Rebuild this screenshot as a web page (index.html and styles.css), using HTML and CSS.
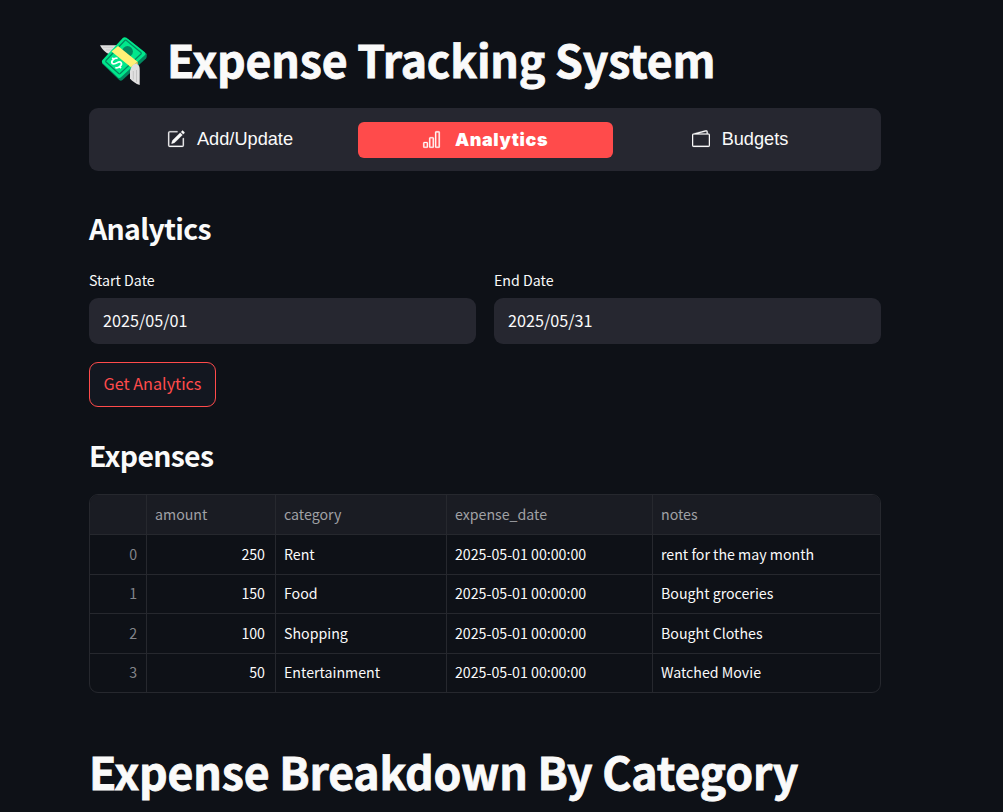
FILE: index.html
```html
<!DOCTYPE html>
<html lang="en">
<head>
<meta charset="utf-8">
<title>Expense Tracking System</title>
<link rel="stylesheet" href="styles.css">
</head>
<body>
<main class="page">
  <h1 class="title">
    <svg class="money" viewBox="0 0 48 48" aria-hidden="true">
      <path d="M0 8.200H17L12 18C7 17 3 13.500 0 8.200Z" fill="#e0e0e0"/>
      <path d="M3 10.300H13M6 13H12" stroke="#bdbdbd" stroke-width=".6"/>
      <path d="M2 24V26.500L19.500 43.300Q21 44.300 22.500 43L46 21.500Q47 20 46.800 17L28 2Z" fill="#028860"/>
      <path d="M23 .8Q24.500-.2 26.500.7L44.800 15.200Q46 16.500 45 18L21 40.300Q19.500 41.600 18 40.500L2.500 26Q1.300 24.500 2.500 23Z" fill="#00e78b"/>
      <path d="M25 3.300Q25.500 2.900 26.200 3.300L41 15.500Q41.700 16.200 41 17L20.200 36.500Q19.500 37.100 18.700 36.500L6 25Q5.400 24.300 6 23.500Z" fill="none" stroke="#028860" stroke-width="1.200"/>
      <circle cx="27.500" cy="14.500" r="5.400" fill="#028860"/>
      <g transform="rotate(-40 16.500 26)" fill="none" stroke="#fff" stroke-width="1.700"><path d="M20.300 23.200C19 20.500 13 20.700 13 23.600C13 26.700 20.300 25.200 20.300 28.500C20.300 31.400 14 31.500 12.700 28.700M16.600 19.300V21.400M16.600 30.700V32.800"/></g>
      <path d="M11.500 14.500L18 9L37.500 24.800L31 30.300Z" fill="#fff176"/>
      <path d="M32.700 28.800L37.500 24.800L38 26.500L33 30.500L31 30.300Z" fill="#ffb74d"/>
      <path d="M30 34Q31 28 36 26.500Q39.700 27.500 39.700 32V48C36 47 32 44 30 41.500Z" fill="#e0e0e0"/>
      <path d="M33.300 34V42.500M36.500 33V45" stroke="#bdbdbd" stroke-width=".8"/>
    </svg>
    <span class="title-text">Expense Tracking System</span>
  </h1>

  <nav class="tabs">
    <a class="tab">
      <svg class="icon" viewBox="0 0 16 16" fill="currentColor"><path d="M15.502 1.940a.5.5 0 0 1 0 .706L14.459 3.690l-2-2L13.502.646a.5.5 0 0 1 .707 0l1.293 1.293zm-1.750 2.456-2-2L4.939 9.210a.5.5 0 0 0-.121.196l-.805 2.414a.25.25 0 0 0 .316.316l2.414-.805a.5.5 0 0 0 .196-.120l6.813-6.814z"/><path fill-rule="evenodd" d="M1 13.500A1.500 1.500 0 0 0 2.500 15h11a1.500 1.500 0 0 0 1.500-1.500v-6a.5.5 0 0 0-1 0v6a.5.5 0 0 1-.5.5h-11a.5.5 0 0 1-.5-.5v-11a.5.5 0 0 1 .5-.5H9a.5.5 0 0 0 0-1H2.500A1.500 1.500 0 0 0 1 2.500v11z"/></svg>
      <span>Add/Update</span>
    </a>
    <a class="tab active">
      <svg class="icon" viewBox="0 0 16 16" fill="currentColor"><path d="M4 11H2v3h2v-3zm5-4H7v7h2V7zm5-5v12h-2V2h2zm-2-1a1 1 0 0 0-1 1v12a1 1 0 0 0 1 1h2a1 1 0 0 0 1-1V2a1 1 0 0 0-1-1h-2zM6 7a1 1 0 0 1 1-1h2a1 1 0 0 1 1 1v7a1 1 0 0 1-1 1H7a1 1 0 0 1-1-1V7zm-5 4a1 1 0 0 1 1-1h2a1 1 0 0 1 1 1v3a1 1 0 0 1-1 1H2a1 1 0 0 1-1-1v-3z"/></svg>
      <span>Analytics</span>
    </a>
    <a class="tab">
      <svg class="icon" viewBox="0 0 16 16" fill="currentColor"><path d="M12.136.326A1.500 1.500 0 0 1 14 1.780V3h.5A1.500 1.500 0 0 1 16 4.500v9a1.500 1.500 0 0 1-1.500 1.500h-13A1.500 1.500 0 0 1 0 13.500v-9a1.500 1.500 0 0 1 1.432-1.499L12.136.326zM5.562 3H13V1.780a.5.5 0 0 0-.621-.484L5.562 3zM1.500 4a.5.5 0 0 0-.5.5v9a.5.5 0 0 0 .5.5h13a.5.5 0 0 0 .5-.5v-9a.5.5 0 0 0-.5-.5h-13z"/></svg>
      <span>Budgets</span>
    </a>
  </nav>

  <h3 class="section analytics"><span>Analytics</span></h3>

  <div class="dates">
    <label class="field">
      <span class="label">Start Date</span>
      <span class="input"><span>2025/05/01</span></span>
    </label>
    <label class="field">
      <span class="label">End Date</span>
      <span class="input"><span>2025/05/31</span></span>
    </label>
  </div>

  <button class="button"><span>Get Analytics</span></button>

  <h3 class="section expenses"><span>Expenses</span></h3>

  <div class="table">
    <div class="cell head"></div><div class="cell head">amount</div><div class="cell head">category</div><div class="cell head">expense_date</div><div class="cell head">notes</div>
    <div class="cell index">0</div><div class="cell num">250</div><div class="cell">Rent</div><div class="cell date">2025-05-01 00:00:00</div><div class="cell">rent for the may month</div>
    <div class="cell index">1</div><div class="cell num">150</div><div class="cell">Food</div><div class="cell date">2025-05-01 00:00:00</div><div class="cell">Bought groceries</div>
    <div class="cell index">2</div><div class="cell num">100</div><div class="cell">Shopping</div><div class="cell date">2025-05-01 00:00:00</div><div class="cell">Bought Clothes</div>
    <div class="cell index">3</div><div class="cell num">50</div><div class="cell">Entertainment</div><div class="cell date">2025-05-01 00:00:00</div><div class="cell">Watched Movie</div>
  </div>

  <h1 class="title breakdown"><span>Expense Breakdown By Category</span></h1>
</main>
</body>
</html>
```
FILE: styles.css
```css
* { box-sizing: border-box; }
body {
  margin: 0;
  height: 812px;
  overflow: hidden;
  background: #0e1117;
  color: #fafafa;
  font-family: "Noto Sans CJK SC", "Noto Sans", sans-serif;
}
.page { width: 792px; margin-left: 89px; padding-top: 29px; }
.title {
  display: flex;
  align-items: center;
  height: 60px;
  margin: 0;
  font-size: 44.6px;
  line-height: 60px;
  font-weight: 700;
  letter-spacing: -0.18px;
  -webkit-text-stroke: 0.8px currentColor;
  white-space: nowrap;
}
.money { width: 48px; height: 48px; margin: 3px 19px 0 11px; flex: none; }
.tabs {
  display: flex;
  height: 63px;
  margin-top: 19px;
  padding: 14px 13.5px 13px;
  border-radius: 9px;
  background: #262730;
}
.tab {
  flex: 1;
  display: flex;
  align-items: center;
  justify-content: center;
  gap: 12px;
  padding-bottom: 2px;
  border-radius: 6px;
  font-family: "Liberation Sans", Arial, sans-serif;
  font-size: 18.2px;
  line-height: 24px;
}
.tab.active {
  background: #ff4b4b;
  color: #fff;
  font-family: Inter, "Liberation Sans", sans-serif;
  font-size: 18px;
  letter-spacing: 0.55px;
  font-weight: 900;
  padding-bottom: 0;
  gap: 14px;
}
.icon { width: 18px; height: 18px; margin-bottom: 1px; stroke: currentColor; stroke-width: 0.2px; }
.tab.active .icon { width: 19px; height: 19px; }
.section {
  height: 40px;
  margin: 0;
  font-size: 28.4px;
  line-height: 40px;
  font-weight: 600;
  letter-spacing: -0.67px;
}
.analytics { margin-top: 37px; }
.dates { display: flex; gap: 18px; margin-top: 22px; }
.field { flex: 1; }
.label { display: block; height: 20px; font-size: 14.2px; line-height: 20px; }
.input {
  display: flex;
  align-items: center;
  height: 46px;
  margin-top: 8px;
  padding: 0 14px 2px;
  border-radius: 9px;
  background: #262730;
  font-size: 16.2px;
  line-height: 24px;
}
.button {
  display: flex;
  align-items: center;
  justify-content: center;
  width: 127px;
  height: 45px;
  margin: 18px 0 0;
  padding: 0 0 3px;
  border: 1px solid #ff4b4b;
  border-radius: 9px;
  background: #131720;
  color: #ff4b4b;
  font: 16.2px/24px "Noto Sans CJK SC", sans-serif;
  white-space: nowrap;
}
.expenses { margin-top: 28px; }
.table {
  display: grid;
  grid-template-columns: 57px 129px 171px 206px 227px;
  grid-template-rows: 40px 40px 39px 40px 38px;
  margin-top: 19px;
  border: 1px solid #26282e;
  border-radius: 9px;
  overflow: hidden;
  font-size: 14.2px;
}
.cell {
  display: flex;
  align-items: center;
  padding: 0 8px 2px;
  border-right: 1px solid #26282e;
  border-bottom: 1px solid #26282e;
  white-space: nowrap;
}
.cell:nth-child(5n) { border-right: 0; }
.cell:nth-last-child(-n+5) { border-bottom: 0; }
.head { background: #1a1c23; color: #a0a1a5; }
.index { justify-content: flex-end; padding-right: 9px; color: #83858a; }
.num { justify-content: flex-end; padding-right: 10px; }
.breakdown { margin-top: 48px; }
```
